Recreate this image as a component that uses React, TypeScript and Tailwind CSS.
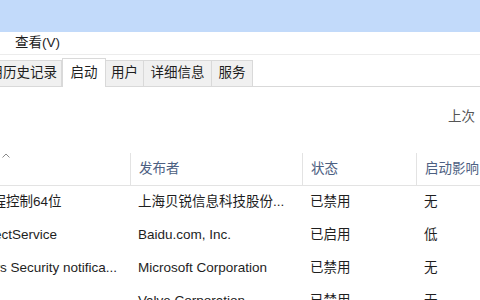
import React from 'react';

interface Row {
  name: string;
  publisher: string;
  status: string;
  impact: string;
}

const rows: Row[] = [
  { name: '日葵远程控制64位', publisher: '上海贝锐信息科技股份...', status: '已禁用', impact: '无' },
  { name: 'NetDetectService', publisher: 'Baidu.com, Inc.', status: '已启用', impact: '低' },
  { name: 'Windows Security notifica...', publisher: 'Microsoft Corporation', status: '已禁用', impact: '无' },
  { name: '', publisher: 'Valve Corporation', status: '已禁用', impact: '无' },
];

const tabs = [
  { label: '应用历史记录', w: 'w-[90px]' },
  { label: '启动', w: 'w-[44px]', active: true },
  { label: '用户', w: 'w-[38px]' },
  { label: '详细信息', w: 'w-[68px]' },
  { label: '服务', w: 'w-[41px]' },
];

const App: React.FC = () => {
  return (
    <div
      className="w-[480px] h-[300px] overflow-hidden bg-white text-[#1e1e1e] text-[13.5px]"
      style={{ fontFamily: '"Liberation Sans", "Noto Sans CJK SC", sans-serif' }}
    >
      {/* title band */}
      <div className="h-[32px] bg-[#c2dafa]" />

      {/* menu bar */}
      <div className="h-[23px] flex items-center pl-[15px] border-b border-[#ececec]">
        查看(V)
      </div>

      {/* tabs */}
      <div className="h-[32px] flex items-end border-b border-[#d9d9d9]">
        <div className="flex items-end ml-[-28px]">
          {tabs.map(t =>
            t.active ? (
              <div
                key={t.label}
                className={`${t.w} h-[29px] mb-[-1px] flex items-center justify-center bg-white border border-b-0 border-[#d9d9d9] whitespace-nowrap`}
              >
                {t.label}
              </div>
            ) : (
              <div
                key={t.label}
                className={`${t.w} h-[26px] flex items-center justify-center bg-[#f0f0f0] border border-b-0 border-l-0 border-[#d9d9d9] whitespace-nowrap`}
              >
                {t.label}
              </div>
            )
          )}
        </div>
      </div>

      {/* top info */}
      <div className="h-[63px] pl-[448px] pt-[20px] text-[#555] whitespace-nowrap">上次</div>

      {/* table header */}
      <div className="h-[36px] flex border-b border-[#e3e3e3] text-[#4d6082]">
        <div className="w-[130px] relative">
          <svg className="absolute left-[2px] top-[3px]" width="8" height="5" viewBox="0 0 8 5">
            <path d="M0.5 4.5 L4 1 L7.5 4.5" fill="none" stroke="#8a8a8a" strokeWidth="1" />
          </svg>
        </div>
        <div className="w-[172px] mt-[3px] border-l border-[#e3e3e3] pl-[8px] flex items-center">发布者</div>
        <div className="w-[114px] mt-[3px] border-l border-[#e3e3e3] pl-[8px] flex items-center">状态</div>
        <div className="flex-1 mt-[3px] border-l border-[#e3e3e3] pl-[8px] flex items-center whitespace-nowrap">启动影响</div>
      </div>

      {/* rows */}
      {rows.map((r, i) => (
        <div key={i} className="h-[33px] flex items-center whitespace-nowrap">
          <div className="w-[130px] overflow-hidden">
            <div className="ml-[-48px]">{r.name}</div>
          </div>
          <div className="w-[172px] pl-[8px] overflow-hidden">{r.publisher}</div>
          <div className="w-[114px] pl-[8px]">{r.status}</div>
          <div className="flex-1 pl-[8px]">{r.impact}</div>
        </div>
      ))}
    </div>
  );
};

export default App;
